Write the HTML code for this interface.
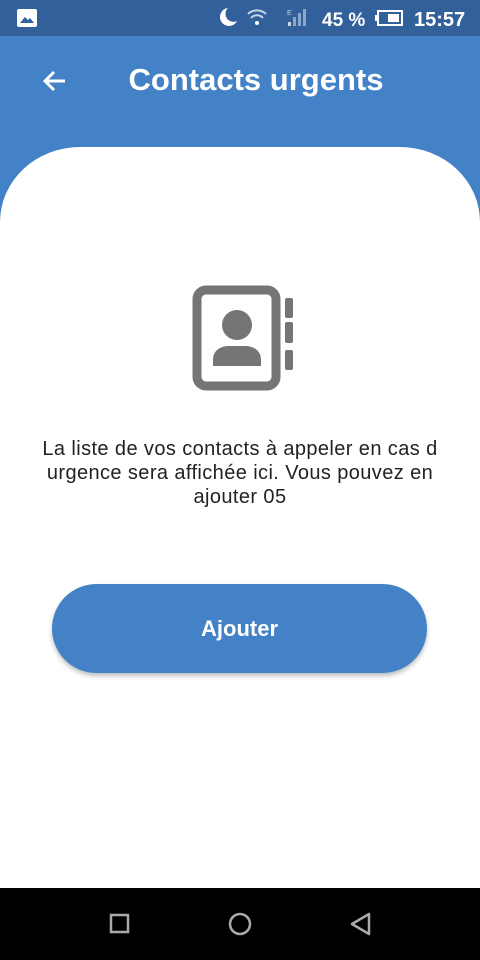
<html><head><style>
body{margin:0;width:480px;height:960px;position:relative;background:#4382c6;font-family:"Liberation Sans",sans-serif;overflow:hidden}
.sb{position:absolute;top:0;left:0;width:480px;height:36px;background:#31609a;color:#fff}
.card{position:absolute;top:147px;left:0;width:480px;height:741px;background:#fff;border-radius:80px 80px 0 0/75px 75px 0 0}
.nav{position:absolute;top:888px;left:0;width:480px;height:72px;background:#000}
</style></head><body>
<div class="sb">
<svg width="480" height="36" style="position:absolute;left:0;top:0">
<rect x="17" y="9" width="20" height="18" rx="2" fill="#fff"/><path d="M20 23l5-6 3 3 2-2 4 5z" fill="#31609a"/>
<path d="M228 8a9 9 0 1 0 9 13a8 8 0 0 1-9-13z" fill="#fff"/>
<path d="M248 14a13 13 0 0 1 18 0M251 18a8 8 0 0 1 12 0" stroke="#c8d6e6" stroke-width="2" fill="none"/><circle cx="257" cy="23" r="2" fill="#fff"/>
<rect x="288" y="22" width="3" height="4" fill="#c8d6e6"/><rect x="293" y="17" width="3" height="9" fill="#8aa8cc"/><rect x="298" y="13" width="3" height="13" fill="#8aa8cc"/><rect x="303" y="9" width="3" height="17" fill="#8aa8cc"/>
<text x="287" y="15" font-size="7" fill="#c8d6e6" font-family="Liberation Sans">E</text>
<text x="322" y="26" font-size="19" font-weight="bold" fill="#fff" font-family="Liberation Sans">45 %</text>
<rect x="378" y="11" width="24" height="14" fill="none" stroke="#fff" stroke-width="2"/><rect x="388" y="14" width="11" height="8" fill="#fff"/><rect x="375" y="15" width="3" height="6" fill="#fff"/>
<text x="414" y="26" font-size="20" font-weight="bold" fill="#fff" font-family="Liberation Sans">15:57</text>
</svg></div>
<svg width="30" height="30" style="position:absolute;left:40px;top:66px"><path d="M25 15H5M14 6l-9 9 9 9" stroke="#fff" stroke-width="3" fill="none"/></svg>
<div style="position:absolute;left:0;width:512px;top:62px;text-align:center;color:#fff;font-size:31px;font-weight:bold">Contacts urgents</div>
<div class="card"></div>
<svg width="120" height="120" style="position:absolute;left:185px;top:280px">
<rect x="12" y="10" width="79" height="96" rx="9" fill="none" stroke="#757575" stroke-width="9"/>
<rect x="100" y="18" width="8" height="20" rx="2" fill="#757575"/><rect x="100" y="42" width="8" height="21" rx="2" fill="#757575"/><rect x="100" y="70" width="8" height="20" rx="2" fill="#757575"/>
<circle cx="52" cy="45" r="15" fill="#757575"/><path d="M28 86v-6c0-10 8-14 16-14h16c8 0 16 4 16 14v6z" fill="#757575"/>
</svg>
<div style="position:absolute;left:32px;width:416px;top:437px;text-align:center;color:#222;font-size:20px;letter-spacing:0.4px;line-height:24px">La liste de vos contacts à appeler en cas d urgence sera affichée ici. Vous pouvez en ajouter 05</div>
<div style="position:absolute;left:52px;top:584px;width:375px;height:89px;border-radius:45px;background:#4382c6;box-shadow:0 3px 5px rgba(0,0,0,.25);color:#fff;font-size:22px;font-weight:bold;text-align:center;line-height:89px">Ajouter</div>
<div class="nav"><svg width="480" height="72">
<rect x="111" y="27" width="17" height="17" fill="none" stroke="#aaa" stroke-width="2.5"/>
<circle cx="240" cy="36" r="10" fill="none" stroke="#aaa" stroke-width="2.5"/>
<path d="M369 26v20l-17-10z" fill="none" stroke="#aaa" stroke-width="2.5" stroke-linejoin="round"/>
</svg></div>
</body></html>
